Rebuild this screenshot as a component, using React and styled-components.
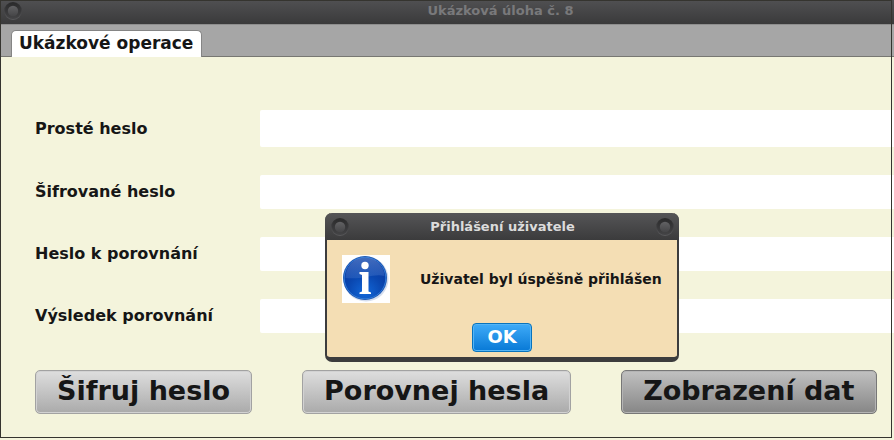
import React from "react";
import styled, { createGlobalStyle } from "styled-components";

const GlobalStyle = createGlobalStyle`
  * { box-sizing: border-box; }
  body {
    margin: 0;
    background: #f4f4dc;
    color: #161616;
    font-family: "DejaVu Sans", Verdana, sans-serif;
    font-weight: 700;
    overflow: hidden;
  }
  button, input { font: inherit; color: inherit; }
`;

const Window = styled.div`
  position: relative;
  overflow: hidden;
  background: #f4f4dc;

  &::after {
    content: "";
    position: absolute;
    inset: 0 2px 0 0;
    border: 1px solid #35342f;
    pointer-events: none;
  }
`;

const TitleBar = styled.header`
  display: flex;
  align-items: center;
  height: 24px;
  padding: 0 0 2px 3px;
  background: linear-gradient(#505052, #3a3a3b);
`;

const WindowTitle = styled.h1`
  flex: 1;
  margin: 0;
  padding-left: 84px;
  font-size: 13px;
  line-height: 20px;
  text-align: center;
  color: #79797b;
`;

const OrbButton = styled.button`
  display: flex;
  padding: 0;
  border: 0;
  background: none;
`;

const TabBar = styled.nav`
  display: flex;
  align-items: flex-end;
  height: 33px;
  padding-left: 11px;
  background: #a6a6a6;
  border-top: 1px solid #8e8e8e;
  box-shadow: inset 0 -1px #777772;
`;

const Tab = styled.button`
  height: 27px;
  padding: 0 8px 2px 7px;
  border: 1px solid #858585;
  border-bottom: 0;
  border-radius: 5px 5px 0 0;
  background: #fff;
  font-size: 17px;
  line-height: 24px;
`;

const Form = styled.form`
  padding: 53px 0 24px 35px;
`;

const Fields = styled.div`
  display: grid;
  row-gap: 28px;
`;

const Field = styled.label`
  display: grid;
  grid-template-columns: 225px 1fr;
  align-items: center;
  font-size: 16px;
  line-height: 20px;
`;

const TextBox = styled.input`
  width: 100%;
  height: ${(p) => (p.$tall ? 37 : 34)}px;
  padding: 0 8px;
  border: 0;
  border-radius: 2px 0 0 2px;
  background: #fff;
`;

const Actions = styled.div`
  display: flex;
  gap: 50px;
  margin-top: 37px;
`;

const ActionButton = styled.button`
  height: 44px;
  padding: 0 21px 2px;
  border: 1px solid ${(p) => (p.$active ? "#777" : "#a2a2a2")};
  border-radius: 5px;
  background: ${(p) =>
    p.$active ? "linear-gradient(#c1c1c1, #868686)" : "linear-gradient(#dedede, #aaaaaa)"};
  box-shadow: inset 0 0 0 1px ${(p) => (p.$active ? "#b4b4b4" : "#d2d2d2")};
  font-size: 27px;
  line-height: 32px;
  white-space: nowrap;
`;

const Dialog = styled.section`
  position: absolute;
  z-index: 1;
  top: 213px;
  left: 325px;
  width: 354px;
  border: 2px solid #3c3c3d;
  border-width: 0 2px 5px;
  border-radius: 7px;
  background: #f4deb4;
`;

const DialogBar = styled.header`
  display: flex;
  align-items: center;
  justify-content: space-between;
  height: 27px;
  margin: 0 -2px;
  padding: 0 4px 0 5px;
  border-radius: 7px 7px 0 0;
  background: linear-gradient(#555557, #3b3b3c);
`;

const DialogTitle = styled.h2`
  margin: 0;
  font-size: 13px;
  line-height: 20px;
  color: #dcdcdc;
`;

const DialogBody = styled.div`
  display: flex;
  align-items: center;
  gap: 30px;
  padding: 15px 15px 20px;
`;

const Message = styled.p`
  margin: 0;
  font-size: 14px;
  line-height: 20px;
  white-space: nowrap;
`;

const DialogFooter = styled.footer`
  display: flex;
  justify-content: center;
  padding-bottom: 5px;
`;

const OkButton = styled.button`
  width: 60px;
  height: 29px;
  padding: 0 0 2px;
  border: 1px solid #0873bd;
  border-radius: 4px;
  background: linear-gradient(#3fabf8, #0879d6);
  box-shadow: inset 0 0 0 1px #55b5f6;
  color: #fff;
  font-size: 18px;
  line-height: 24px;
`;

const Orb = ({ id }) => (
  <svg width="20" height="20" viewBox="0 0 20 20" aria-hidden="true">
    <defs>
      <linearGradient id={`${id}-ring`} x1="0" y1="0" x2="0" y2="1">
        <stop offset="0" stopColor="#29292a" />
        <stop offset="1" stopColor="#5a5a5c" />
      </linearGradient>
      <linearGradient id={`${id}-well`} x1="0" y1="0" x2="0" y2="1">
        <stop offset="0" stopColor="#2b2b2c" />
        <stop offset="1" stopColor="#444446" />
      </linearGradient>
      <linearGradient id={`${id}-knob`} x1="0" y1="0" x2="0" y2="1">
        <stop offset="0" stopColor="#626264" />
        <stop offset="1" stopColor="#454547" />
      </linearGradient>
    </defs>
    <circle cx="10" cy="10" r="9" fill={`url(#${id}-ring)`} />
    <circle cx="10" cy="10" r="8" fill={`url(#${id}-well)`} />
    <circle cx="10" cy="10" r="5.2" fill={`url(#${id}-knob)`} />
  </svg>
);

const InfoIcon = () => (
  <svg width="48" height="48" viewBox="0 0 48 48" role="img" aria-label="Informace">
    <defs>
      <radialGradient id="info-ball" cx="0.5" cy="0.85" r="0.85">
        <stop offset="0" stopColor="#1267d8" />
        <stop offset="0.5" stopColor="#0a47b0" />
        <stop offset="1" stopColor="#07329a" />
      </radialGradient>
      <linearGradient id="info-gloss" x1="0" y1="0" x2="0" y2="1">
        <stop offset="0" stopColor="#7fa6e0" stopOpacity="0.5" />
        <stop offset="1" stopColor="#4f80d0" stopOpacity="0.3" />
      </linearGradient>
    </defs>
    <rect width="48" height="48" fill="#fff" />
    <circle cx="24" cy="24" r="22.5" fill="#d5deee" />
    <circle cx="23" cy="23" r="22" fill="#1c55b0" />
    <circle cx="23" cy="23" r="20.8" fill="url(#info-ball)" stroke="#3079d6" />
    <path d="M3.5 23a19.5 19.5 0 0 1 39-2C32 18 20 25 3.5 23z" fill="url(#info-gloss)" />
    <circle cx="23" cy="10.5" r="3.7" fill="#fff" />
    <path d="M17.5 17H26.5V36.5L29 37.5V39H17.5V37.5L20 36.5V20L17.5 19z" fill="#fff" />
  </svg>
);

const fields = [
  { id: "plain", label: "Prosté heslo", tall: true },
  { id: "encrypted", label: "Šifrované heslo" },
  { id: "compare", label: "Heslo k porovnání" },
  { id: "result", label: "Výsledek porovnání" },
];

export default function App() {
  return (
    <>
      <GlobalStyle />
      <Window>
        <TitleBar>
          <OrbButton type="button" aria-label="Nabídka okna">
            <Orb id="window-menu" />
          </OrbButton>
          <WindowTitle>Ukázková úloha č. 8</WindowTitle>
        </TitleBar>
        <TabBar>
          <Tab type="button">Ukázkové operace</Tab>
        </TabBar>
        <Form onSubmit={(e) => e.preventDefault()}>
          <Fields>
            {fields.map((f) => (
              <Field key={f.id} htmlFor={f.id}>
                {f.label}
                <TextBox id={f.id} type="text" $tall={f.tall} />
              </Field>
            ))}
          </Fields>
          <Actions>
            <ActionButton type="button">Šifruj heslo</ActionButton>
            <ActionButton type="button">Porovnej hesla</ActionButton>
            <ActionButton type="button" $active>Zobrazení dat</ActionButton>
          </Actions>
        </Form>
        <Dialog role="dialog" aria-labelledby="dialog-title">
          <DialogBar>
            <OrbButton type="button" aria-label="Nabídka dialogu">
              <Orb id="dialog-menu" />
            </OrbButton>
            <DialogTitle id="dialog-title">Přihlášení uživatele</DialogTitle>
            <OrbButton type="button" aria-label="Zavřít">
              <Orb id="dialog-close" />
            </OrbButton>
          </DialogBar>
          <DialogBody>
            <InfoIcon />
            <Message>Uživatel byl úspěšně přihlášen</Message>
          </DialogBody>
          <DialogFooter>
            <OkButton type="button">OK</OkButton>
          </DialogFooter>
        </Dialog>
      </Window>
    </>
  );
}
